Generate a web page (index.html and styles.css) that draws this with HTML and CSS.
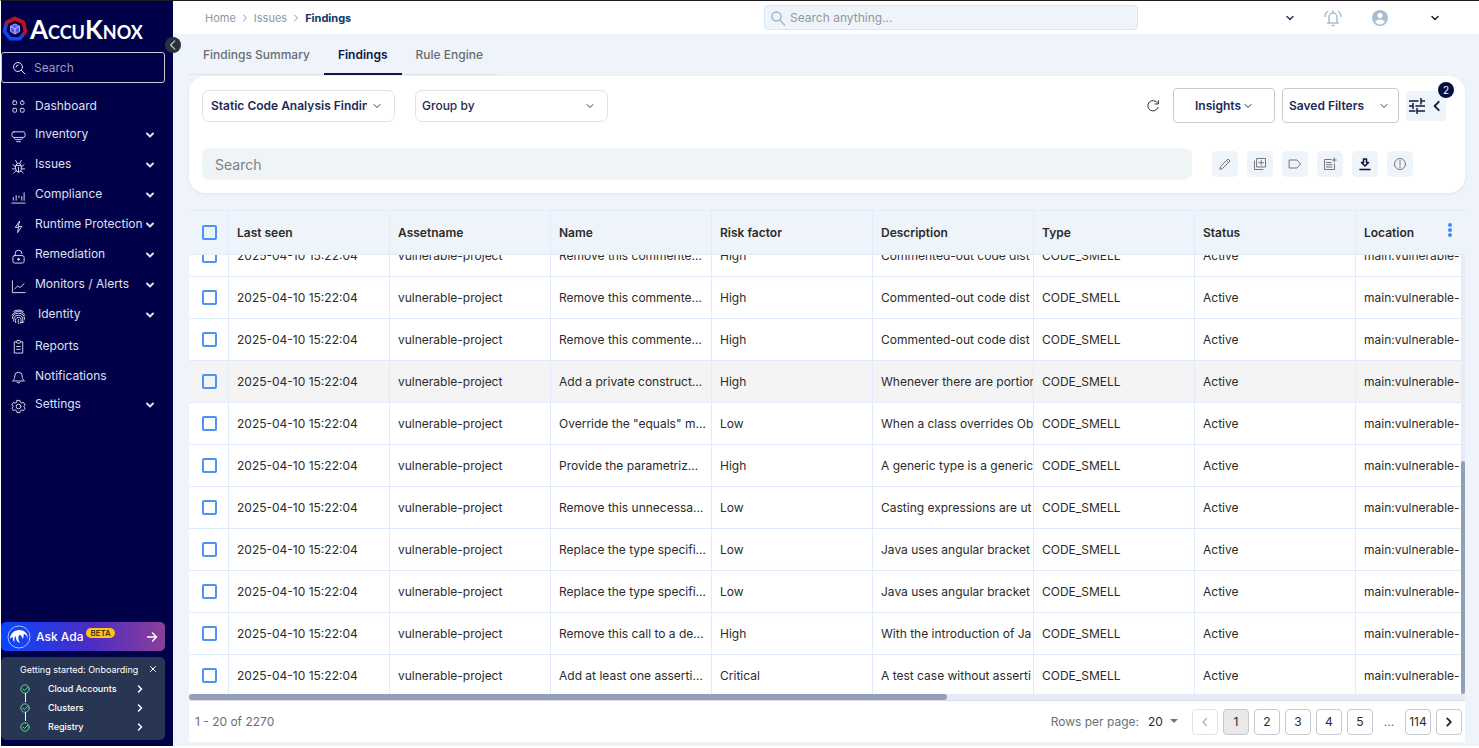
FILE: index.html
```html
<!DOCTYPE html>
<html lang="en">

<head>
  <meta charset="UTF-8">
  <meta name="viewport" content="width=device-width, initial-scale=1.0">
  <title>AccuKnox - Findings</title>
  <link rel="stylesheet" href="styles.css">
</head>

<body>
  <svg class="sprite" aria-hidden="true">
    <symbol id="down" viewBox="0 0 10 10"><path d="M2 3.5l3 3 3-3" /></symbol>
    <symbol id="right" viewBox="0 0 10 10"><path d="M3.5 2l3 3-3 3" /></symbol>
    <symbol id="left" viewBox="0 0 10 10"><path d="M6.5 1.5L3 5l3.5 3.5" /></symbol>
    <symbol id="check" viewBox="0 0 10 10"><circle cx="5" cy="5" r="4.2" /><path d="M3 5l1.500 1.500L8 3" /></symbol>
  </svg>

  <div class="app">
    <aside class="sidebar">
      <a class="logo" href="#">
        <svg width="26" height="26" viewBox="0 0 26 26" fill="none">
          <defs>
            <linearGradient id="ring" x1="0.2" y1="1" x2="0.8" y2="0">
              <stop offset="0.3" stop-color="#0b45f5" />
              <stop offset="0.62" stop-color="#c0131f" />
            </linearGradient>
          </defs>
          <path d="M13 2.500l8.400 4 2.100 9-5.800 7.300H8.300L2.500 15.500l2.100-9z" stroke="url(#ring)" stroke-width="3.600" stroke-linejoin="round" />
          <path d="M13 8l4.500 2.300v5.200L13 18l-4.500-2.500v-5.200z" fill="#5b55f0" stroke="#a9a5ff" />
          <path d="M8.500 10.300L13 12.700l4.500-2.400M13 12.700V18" stroke="#c4c1ff" />
        </svg>
        <span>AccuKnox</span>
      </a>
      <button class="collapse" aria-label="Collapse menu"><svg class="icon" width="12" height="12"><use href="#left" /></svg></button>

      <label class="side-search">
        <svg class="icon" width="14" height="14" viewBox="0 0 14 14"><circle cx="6" cy="6" r="4.500" /><path d="M4 6a2 2 0 0 1 2-2M9.300 9.300L13 13" /></svg>
        <input type="text" placeholder="Search" aria-label="Search menu">
      </label>

      <nav class="menu">
        <a class="item plain" href="#">
          <svg class="icon" viewBox="0 0 16 16"><rect x="2" y="2" width="4" height="4" rx="1" /><rect x="10" y="2" width="4" height="4" rx="2" /><rect x="2" y="10" width="4" height="4" rx="1" /><rect x="10" y="10" width="4" height="4" rx="1" /></svg>
          <span>Dashboard</span>
        </a>
        <a class="item" href="#">
          <svg class="icon" viewBox="0 0 16 16"><rect x="1" y="3" width="14" height="6" rx="2" /><path d="M3.500 9.500c.5 1.500 1 1.800 2 1.800h5c1 0 1.500-.3 2-1.800M6 13.500h4" /></svg>
          <span>Inventory</span><svg class="icon arrow"><use href="#down" /></svg>
        </a>
        <a class="item" href="#">
          <svg class="icon" viewBox="0 0 16 16"><path d="M5 7h6v4a3 3 0 0 1-6 0zM5.500 7a2.500 2.500 0 0 1 5 0M8 9v5M5 1.500l1.500 3M11 1.500l-1.500 3M5 8.500L2 6M11 8.500L14 6M5 10.500H1.500M11 10.500h3.500M5.500 12.500L3 15M10.500 12.500L13 15" /></svg>
          <span>Issues</span><svg class="icon arrow"><use href="#down" /></svg>
        </a>
        <a class="item" href="#">
          <svg class="icon" viewBox="0 0 16 16"><path d="M1 15h14M2.500 12V9M5.500 12V7M8.500 9V7.500M11.500 12V8M14 12V4" /></svg>
          <span>Compliance</span><svg class="icon arrow"><use href="#down" /></svg>
        </a>
        <a class="item" href="#">
          <svg class="icon" viewBox="0 0 16 16"><path d="M9 2.500L4.500 9H8l-1 5.500L11.500 8H8z" /></svg>
          <span>Runtime Protection</span><svg class="icon arrow"><use href="#down" /></svg>
        </a>
        <a class="item" href="#">
          <svg class="icon" viewBox="0 0 16 16"><path d="M4.500 7V5a3.500 3.500 0 0 1 7-.5V5" /><rect x="2" y="7" width="12" height="8" rx="2" /><circle cx="8" cy="11" r="1" fill="currentColor" /></svg>
          <span>Remediation</span><svg class="icon arrow"><use href="#down" /></svg>
        </a>
        <a class="item" href="#">
          <svg class="icon" viewBox="0 0 16 16"><path d="M1.500 2v12.500H15M4 10.500l3-3 2.500 1.500L14 5" /></svg>
          <span>Monitors / Alerts</span><svg class="icon arrow"><use href="#down" /></svg>
        </a>
        <a class="item wide" href="#">
          <svg class="icon" viewBox="0 0 16 16"><path d="M3 2.500Q8-.5 13 2.500M1 6.500Q4 2.300 8 2.300T15 6.500M1.500 10Q1.500 4.500 8 4.500T14.500 11M2.800 13Q2.300 6.700 8 6.700T12.500 13.500M5 14.500Q3.500 9 8 9T10 15M8 11.200Q7 13 8 15.500M11 14.500Q13 15 14 13.500" /></svg>
          <span>Identity</span><svg class="icon arrow"><use href="#down" /></svg>
        </a>
        <a class="item plain" href="#">
          <svg class="icon" viewBox="0 0 16 16"><path d="M6 3H3.500v12h9V3H10" /><rect x="6" y="1.500" width="4" height="3" rx="1" /><path d="M6 8h4M6 11h4" /></svg>
          <span>Reports</span>
        </a>
        <a class="item plain" href="#">
          <svg class="icon" viewBox="0 0 16 16"><path d="M2 12.500c2-1.500 2-3 2-5a4 4 0 0 1 8 0c0 2 0 3.500 2 5zM6.500 14.500q1.500 1 3 0" /></svg>
          <span>Notifications</span>
        </a>
        <a class="item" href="#">
          <svg class="icon" viewBox="0 0 16 16"><circle cx="8" cy="8" r="2.500" /><path d="M6.500 1.500h3l.5 2 1.500.8 2-.6 1.500 2.600L13.600 8l1.400 1.700-1.500 2.600-2-.6-1.500.8-.5 2h-3l-.5-2-1.500-.8-2 .6L1 9.700 2.400 8 1 6.300l1.500-2.600 2 .6L6 3.500z" /></svg>
          <span>Settings</span><svg class="icon arrow"><use href="#down" /></svg>
        </a>
      </nav>

      <a class="ada" href="#">
        <svg width="24" height="24" viewBox="0 0 24 24" fill="none">
          <circle cx="12" cy="12" r="11" stroke="#a9bcff" />
          <path d="M3 14c0-5 4-9 9-9 5 0 9 3 9 9-1-3-2-5-4.500-5 .5 2 0 4-1 5-.5-3-1.500-4-3-4-1.500 1-1.500 5 .5 8-3-1-4.500-4-4-7-1.500 1-2 3-1.500 6-1.500-1-2-3-1.500-5-1.500 0-2 1-3 2z" fill="#fff" />
        </svg>
        <span class="ada-name">Ask Ada</span>
        <span class="beta">BETA</span>
        <svg class="icon ada-arrow" width="12" height="12" viewBox="0 0 12 12"><path d="M1.500 6h9M6.500 2l4 4-4 4" /></svg>
      </a>

      <section class="onboarding">
        <header>
          <span>Getting started: Onboarding</span>
          <button aria-label="Close"><svg class="icon" width="8" height="8" viewBox="0 0 8 8"><path d="M1.500 1.500l5 5M6.500 1.500l-5 5" /></svg></button>
        </header>
        <ul>
          <li><svg class="icon tick"><use href="#check" /></svg><a href="#">Cloud Accounts</a><svg class="icon go"><use href="#right" /></svg></li>
          <li><svg class="icon tick"><use href="#check" /></svg><a href="#">Clusters</a><svg class="icon go"><use href="#right" /></svg></li>
          <li><svg class="icon tick"><use href="#check" /></svg><a href="#">Registry</a><svg class="icon go"><use href="#right" /></svg></li>
        </ul>
      </section>
    </aside>

    <main class="main">
      <div class="topbar">
        <nav class="crumbs">
          <a href="#">Home</a>
          <svg class="icon" width="10" height="10"><use href="#right" /></svg>
          <a href="#">Issues</a>
          <svg class="icon" width="10" height="10"><use href="#right" /></svg>
          <a class="current" href="#">Findings</a>
        </nav>
        <label class="top-search">
          <svg class="icon" width="16" height="16" viewBox="0 0 16 16"><circle cx="6.500" cy="6.500" r="4.500" /><path d="M10 10l4.500 5" /></svg>
          <input type="text" placeholder="Search anything..." aria-label="Search anything">
        </label>
        <div class="top-actions">
          <button aria-label="Workspace"><svg class="icon" width="10" height="10"><use href="#down" /></svg></button>
          <button class="pale" aria-label="Alerts">
            <svg class="icon" width="18" height="18" viewBox="0 0 18 18"><path d="M3.500 14h11M5 14V8a4 4 0 0 1 8 0v6M9 2v2M8 16.500h2M1 7.500q0-3 2.500-5M17 7.500q0-3-2.500-5" /></svg>
          </button>
          <button class="pale" aria-label="Profile">
            <svg width="18" height="18" viewBox="0 0 18 18"><circle cx="9" cy="9" r="8" fill="#a9bdd0" /><circle cx="9" cy="6.500" r="2.500" fill="#fff" /><path d="M4 12.500q5-4 10 0-2 3-5 3t-5-3z" fill="#fff" /></svg>
          </button>
          <button class="user" aria-label="Account"><svg class="icon" width="10" height="10"><use href="#down" /></svg></button>
        </div>
      </div>

      <div class="content">
        <nav class="tabs">
          <a href="#">Findings Summary</a>
          <a class="active" href="#">Findings</a>
          <a href="#">Rule Engine</a>
        </nav>

        <div class="card">
          <div class="filters">
            <select class="picker strong" aria-label="Finding type"><option>Static Code Analysis Findings</option></select>
            <select class="picker" aria-label="Group by"><option>Group by</option></select>
            <div class="filter-actions">
              <button class="refresh" aria-label="Refresh">
                <svg class="icon" width="14" height="14" viewBox="0 0 14 14"><path d="M12 8.500A5.200 5.200 0 1 1 11.500 4M12.300 1.500V5H9" /></svg>
              </button>
              <button class="outlined">Insights<svg class="icon" width="10" height="10"><use href="#down" /></svg></button>
              <select class="outlined saved" aria-label="Saved filters"><option>Saved Filters</option></select>
              <button class="tune" aria-label="Filters">
                <svg class="icon" width="16" height="16" viewBox="0 0 16 16"><path d="M0 3h9M12 3h4M12 0v6M0 8h4M7 8h9M4 5.500v5M0 13h6M9 13h7M8 10.500v5" /></svg>
                <svg class="icon" width="12" height="12"><use href="#left" /></svg>
                <span class="badge">2</span>
              </button>
            </div>
          </div>
          <div class="tools">
            <input class="search" type="text" placeholder="Search" aria-label="Search findings">
            <div class="tool-buttons">
              <button aria-label="Edit"><svg class="icon" viewBox="0 0 14 14"><path d="M2 12l.5-2.500L10 2l2 2-7.500 7.500zM8.500 3.500l2 2" /></svg></button>
              <button aria-label="Add to group"><svg class="icon" viewBox="0 0 14 14"><path d="M4 1.500h8.500V10H4zM1.500 4v8.500H10M8.200 3.500V8M6 5.700h4.500" /></svg></button>
              <button aria-label="Tag"><svg class="icon" viewBox="0 0 14 14"><path d="M1.500 3H9l3.500 4L9 11H1.500z" /></svg></button>
              <button aria-label="Create ticket"><svg class="icon" viewBox="0 0 14 14"><path d="M8 2.500H1.500v10h10V7M3.500 5.500H8M3.500 7.700h5.500M3.500 10h5.500M11.300 1v4M9.300 3h4" /></svg></button>
              <button class="dark" aria-label="Download"><svg class="icon" viewBox="0 0 14 14"><path d="M2 12.500h10M5.500 2h3v3.500h2L7 9 3.500 5.500h2z" /></svg></button>
              <button aria-label="Info"><svg class="icon" viewBox="0 0 14 14"><circle cx="7" cy="7" r="5.500" /><path d="M7 3.500V8M7 9.500v1" /></svg></button>
            </div>
          </div>
        </div>

        <div class="grid">
          <div class="grid-scroll" id="gridScroll">
            <table>
              <thead>
                <tr>
                  <th class="pick"><input type="checkbox" aria-label="Select all"></th>
                  <th>Last seen</th>
                  <th>Assetname</th>
                  <th>Name</th>
                  <th>Risk factor</th>
                  <th>Description</th>
                  <th>Type</th>
                  <th>Status</th>
                  <th>Location</th>
                </tr>
              </thead>
              <tbody id="rows"></tbody>
            </table>
          </div>
          <button class="columns" aria-label="Columns">
            <svg width="4" height="14" viewBox="0 0 4 14" fill="#3d8bfd"><circle cx="2" cy="2" r="2" /><circle cx="2" cy="7" r="2" /><circle cx="2" cy="12" r="2" /></svg>
          </button>
          <div class="track-y"><div class="thumb-y"></div></div>
        </div>
        <div class="track-x"><div class="thumb-x"></div></div>

        <footer class="pager">
          <span class="count">1 - 20 of 2270</span>
          <label for="perPage">Rows per page:</label>
          <select id="perPage"><option>20</option></select>
          <div class="pages">
            <button disabled aria-label="Previous page"><svg class="icon" width="10" height="10"><use href="#left" /></svg></button>
            <button class="on">1</button>
            <button>2</button>
            <button>3</button>
            <button>4</button>
            <button>5</button>
            <span>...</span>
            <button>114</button>
            <button aria-label="Next page"><svg class="icon" width="12" height="12"><use href="#right" /></svg></button>
          </div>
        </footer>
      </div>
    </main>
  </div>

  <script src="script.js"></script>
</body>

</html>
```
FILE: styles.css
```css
* {
  box-sizing: border-box;
}

body {
  margin: 0;
  font-family: Inter, "Open Sans", sans-serif;
  font-size: 12px;
  color: #2b2b2b;
  background-color: white;
}

button,
input,
select {
  font-family: inherit;
  font-size: inherit;
  color: inherit;
  margin: 0;
}

button {
  padding: 0;
  border: none;
  background: none;
  cursor: pointer;
}

a {
  color: inherit;
  text-decoration: none;
}

.sprite {
  display: none;
}

.icon {
  fill: none;
  stroke: currentColor;
  stroke-width: 1;
  stroke-linecap: round;
  stroke-linejoin: round;
  flex-shrink: 0;
}

.app {
  display: flex;
  height: 100vh;
  border-top: 1px solid #1c1b22;
  border-left: 1px solid white;
  border-bottom: 2px solid white;
}

/* sidebar */
.sidebar {
  position: relative;
  display: flex;
  flex-direction: column;
  width: 172px;
  flex-shrink: 0;
  padding: 13px 8px 6px 0;
  background-color: #01014a;
  color: #dfe0ee;
}

.logo {
  display: flex;
  align-items: center;
  gap: 2px;
  height: 30px;
  padding-left: 1px;
  color: white;
}

.logo span {
  font-family: Lato, sans-serif;
  font-size: 26px;
  font-weight: bold;
  font-variant: small-caps;
  line-height: 30px;
}

.collapse {
  position: absolute;
  top: 36px;
  right: -8px;
  z-index: 2;
  display: flex;
  align-items: center;
  justify-content: center;
  width: 16px;
  height: 16px;
  border-radius: 50%;
  background-color: #28323c;
  color: #c5cbd2;
}

.side-search {
  display: flex;
  align-items: center;
  gap: 6px;
  height: 31px;
  margin-top: 8px;
  padding-left: 10px;
  border: 1px solid #c9c9dc;
  border-radius: 3px;
}

.side-search input {
  width: 100%;
  border: none;
  outline: none;
  background: none;
}

.side-search input::placeholder {
  color: #9a9bb8;
}

.menu {
  display: flex;
  flex-direction: column;
  margin-top: 7px;
}

.item {
  display: flex;
  align-items: center;
  gap: 9px;
  height: 30px;
  padding: 0 10px;
}

.item.wide {
  gap: 12px;
}

.item span {
  flex: 1;
  padding-bottom: 3px;
  white-space: nowrap;
}

.item.plain span {
  padding-bottom: 0;
}

.item .icon {
  width: 15px;
  height: 15px;
  margin-top: 3px;
}

.item .arrow {
  width: 10px;
  height: 10px;
  margin-top: 0;
  margin-left: -20px;
  stroke-width: 2;
}

.ada {
  display: flex;
  align-items: center;
  height: 29px;
  margin-top: auto;
  padding: 0 7px 0 6px;
  border-radius: 5px;
  background-image: linear-gradient(90deg, #0846ff, #4d2cc4 55%, #8c3f98);
  color: white;
}

.ada-name {
  margin-left: 5px;
  font-size: 12px;
  font-weight: 500;
}

.beta {
  margin: 0 auto 8px 3px;
  padding: 0 4px;
  border-radius: 5px;
  background-color: #fcc419;
  color: #222;
  font-size: 8px;
  font-weight: 500;
  line-height: 10px;
}

.ada-arrow {
  stroke-width: 1.5;
}

.onboarding {
  margin-top: 6px;
  padding: 2px 8px 4px 19px;
  border-radius: 5px;
  background-color: #283654;
  color: white;
  font-size: 9px;
}

.onboarding header {
  display: flex;
  align-items: center;
  justify-content: space-between;
  height: 20px;
  white-space: nowrap;
}

.onboarding header button {
  display: flex;
}

.onboarding ul {
  margin: 0;
  padding: 0;
  list-style: none;
}

.onboarding li {
  position: relative;
  display: flex;
  align-items: center;
  height: 19px;
  padding-right: 12px;
  font-weight: 500;
}

.onboarding li + li::before {
  content: "";
  position: absolute;
  top: -5px;
  left: 5px;
  width: 1px;
  height: 9px;
  background-color: white;
}

.tick {
  width: 10px;
  height: 10px;
  margin-right: 18px;
  color: #5fd394;
}

.go {
  width: 10px;
  height: 10px;
  margin-left: auto;
  stroke-width: 1.5;
}

/* top bar */
.main {
  display: flex;
  flex-direction: column;
  flex: 1;
  min-width: 0;
  background-color: #eef4f9;
}

.topbar {
  display: flex;
  align-items: center;
  height: 33px;
  background-color: white;
}

.crumbs {
  display: flex;
  align-items: center;
  flex: 1;
  gap: 4px;
  padding-left: 32px;
  font-size: 11px;
  color: #8f959c;
}

.crumbs .current {
  color: #0b3a63;
  font-weight: 700;
}

.top-search {
  display: flex;
  align-items: center;
  gap: 2px;
  width: 374px;
  height: 25px;
  padding: 0 5px;
  border: 1px solid #d5e7fc;
  border-radius: 4px;
  background-color: #eef4f9;
  color: #a3b8cc;
}

.top-search .icon {
  stroke-width: 1.5;
}

.top-search input {
  flex: 1;
  border: none;
  outline: none;
  background: none;
}

.top-search input::placeholder {
  color: #92989e;
}

.top-actions {
  display: flex;
  align-items: center;
  justify-content: flex-end;
  gap: 29px;
  width: 341px;
  padding-right: 39px;
}

.top-actions button {
  display: flex;
  color: #2b3a5c;
}

.top-actions .icon {
  stroke-width: 1.5;
}

.top-actions .pale {
  color: #a9bdd0;
}

.top-actions .user {
  margin-left: 12px;
  color: #222;
}

/* page content */
.content {
  display: flex;
  flex-direction: column;
  flex: 1;
  min-height: 0;
  padding: 0 14px 4px 16px;
}

.tabs {
  display: flex;
  align-self: flex-start;
  height: 41px;
  border-bottom: 1px solid #e0e5ec;
  color: #6a6e74;
  font-weight: 500;
}

.tabs a {
  display: flex;
  align-items: center;
  height: 41px;
  padding: 2px 14px 0;
  border-bottom: 2px solid transparent;
}

.tabs .active {
  border-bottom-color: #0d1748;
  color: #0d1748;
  font-weight: 600;
}

.card {
  margin-top: 1px;
  padding: 12px 19px 13px 13px;
  border-radius: 16px;
  background-color: white;
  box-shadow: 0 1px 3px rgba(60, 90, 130, 0.1);
}

.filters {
  display: flex;
  align-items: center;
  gap: 20px;
}

.picker,
.outlined {
  appearance: none;
  border: 1px solid #dfe2ec;
  border-radius: 7px;
  background-color: white;
  color: #1d2a55;
  font-weight: 500;
}

.picker,
.saved {
  background-image: url("data:image/svg+xml,%3Csvg xmlns='http://www.w3.org/2000/svg' width='10' height='10' fill='none' stroke='%23303c60' stroke-linecap='round'%3E%3Cpath d='M2 3.500l3 3 3-3'/%3E%3C/svg%3E");
  background-repeat: no-repeat;
  background-position: right 12px center;
}

.picker {
  width: 193px;
  height: 32px;
  padding: 0 27px 0 6px;
}

.picker.strong {
  padding-left: 8px;
  font-weight: 600;
}

.filter-actions {
  display: flex;
  align-items: center;
  gap: 7px;
  margin-left: auto;
}

.refresh {
  display: flex;
  margin-right: 6px;
  color: #333;
}

.outlined {
  display: flex;
  align-items: center;
  justify-content: center;
  gap: 2px;
  width: 102px;
  height: 35px;
  border-color: #c9cbd1;
  border-radius: 4px;
  font-weight: 600;
}

.outlined.saved {
  width: 117px;
  padding: 0 24px 0 6px;
  background-position: right 9px center;
}

.tune {
  position: relative;
  display: flex;
  align-items: center;
  justify-content: center;
  gap: 6px;
  width: 40px;
  height: 30px;
  border-radius: 4px;
  background-color: #eef4f9;
  color: #111a3a;
}

.tune .icon {
  stroke-width: 1.5;
}

.badge {
  position: absolute;
  top: -9px;
  right: -8px;
  width: 16px;
  height: 16px;
  border-radius: 50%;
  background-color: #04103f;
  color: white;
  font-size: 10px;
  line-height: 16px;
}

.tools {
  display: flex;
  align-items: center;
  gap: 20px;
  margin-top: 25px;
  padding-right: 33px;
}

.search {
  flex: 1;
  height: 32px;
  padding: 0 13px;
  border: none;
  border-radius: 8px;
  background-color: #eff5f6;
  font-size: 14px;
}

.search::placeholder {
  color: #7b8084;
}

.tool-buttons {
  display: flex;
  gap: 9px;
}

.tool-buttons button {
  display: flex;
  align-items: center;
  justify-content: center;
  width: 26px;
  height: 26px;
  border-radius: 5px;
  background-color: #eef4f9;
  color: #74777b;
}

.tool-buttons .icon {
  width: 14px;
  height: 14px;
}

.tool-buttons .dark {
  color: #120c3a;
}

.dark .icon {
  stroke-width: 1.5;
}

/* findings table */
.grid {
  position: relative;
  display: flex;
  flex: 1;
  min-height: 0;
  margin-top: 17px;
}

.grid-scroll {
  flex: 1;
  min-width: 0;
  overflow: hidden;
}

table {
  width: 1328px;
  table-layout: fixed;
  border-collapse: separate;
  border-spacing: 0;
  background-color: white;
}

th,
td {
  height: 42px;
  padding: 0 0 0 8px;
  border-right: 1px solid #e0ebfc;
  border-bottom: 1px solid #dfeafa;
  text-align: left;
  white-space: nowrap;
  overflow: hidden;
}

th {
  position: sticky;
  top: 0;
  z-index: 1;
  height: 45px;
  border-top: 1px solid #e0ebfc;
  background-color: #eef4f9;
  font-weight: 600;
}

.pick {
  width: 40px;
  padding: 0 0 0 13px;
}

.hovered td {
  background-color: #f4f4f4;
}

input[type="checkbox"] {
  display: block;
  appearance: none;
  width: 15px;
  height: 15px;
  border: 2px solid #4b93fb;
  border-radius: 2px;
}

.columns {
  position: absolute;
  top: 13px;
  right: 13px;
  z-index: 2;
  display: flex;
}

.track-y {
  position: absolute;
  top: 45px;
  right: 0;
  bottom: 0;
  display: flex;
  align-items: flex-end;
  width: 4px;
  background-color: #e6ebf6;
}

.thumb-y {
  width: 4px;
  height: 53%;
  border-radius: 2px;
  background-color: #949fb5;
}

.track-x {
  height: 6px;
  background-color: #e6ebf6;
}

.thumb-x {
  width: 60%;
  max-width: 758px;
  height: 6px;
  border-radius: 3px;
  background-color: #949fb5;
}

.pager {
  display: flex;
  align-items: center;
  height: 42px;
  padding: 0 3px 0 6px;
  border-top: 1px solid #d9dce2;
  background-color: white;
  color: #6c6f73;
}

.count {
  margin-right: auto;
}

#perPage {
  appearance: none;
  width: 30px;
  margin: 0 14px 0 9px;
  padding: 0;
  border: none;
  background: url("data:image/svg+xml,%3Csvg xmlns='http://www.w3.org/2000/svg' width='8' height='5' fill='%23757575'%3E%3Cpath d='M0 0h8L4 4z'/%3E%3C/svg%3E") no-repeat right center;
  color: #2b2b2b;
}

.pages {
  display: flex;
  align-items: center;
  gap: 5px;
}

.pages button {
  display: flex;
  align-items: center;
  justify-content: center;
  width: 26px;
  height: 26px;
  border: 1px solid #c6c8cc;
  border-radius: 4px;
  color: #2b2b2b;
}

.pages .icon {
  stroke-width: 1.5;
}

.pages button:disabled {
  border-color: #e2e3e6;
  color: #b5b7ba;
}

.pages .on {
  background-color: #e9e9e9;
}

.pages span {
  width: 22px;
  text-align: center;
}
```
FILE: script.js
```js
const findings = [
  ["Remove this commente…", "High", "Commented-out code dist"],
  ["Remove this commente…", "High", "Commented-out code dist"],
  ["Remove this commente…", "High", "Commented-out code dist"],
  ["Add a private construct…", "High", "Whenever there are portion"],
  ["Override the \"equals\" m…", "Low", "When a class overrides Ob"],
  ["Provide the parametriz…", "High", "A generic type is a generic"],
  ["Remove this unnecessa…", "Low", "Casting expressions are ut"],
  ["Replace the type specifi…", "Low", "Java uses angular bracket"],
  ["Replace the type specifi…", "Low", "Java uses angular bracket"],
  ["Remove this call to a de…", "High", "With the introduction of Ja"],
  ["Add at least one asserti…", "Critical", "A test case without asserti"]
];

const rows = document.getElementById("rows");
findings.forEach(([name, risk, description], index) => {
  const tr = document.createElement("tr");
  if (index === 3) {
    tr.className = "hovered";
  }
  tr.innerHTML = `
    <td class="pick"><input type="checkbox" aria-label="Select row"></td>
    <td>2025-04-10 15:22:04</td>
    <td>vulnerable-project</td>
    <td>${name}</td>
    <td>${risk}</td>
    <td>${description}</td>
    <td>CODE_SMELL</td>
    <td>Active</td>
    <td>main:vulnerable-</td>`;
  rows.appendChild(tr);
});

// keep the list scrolled near its end
document.getElementById("gridScroll").scrollTop = 20;
```
